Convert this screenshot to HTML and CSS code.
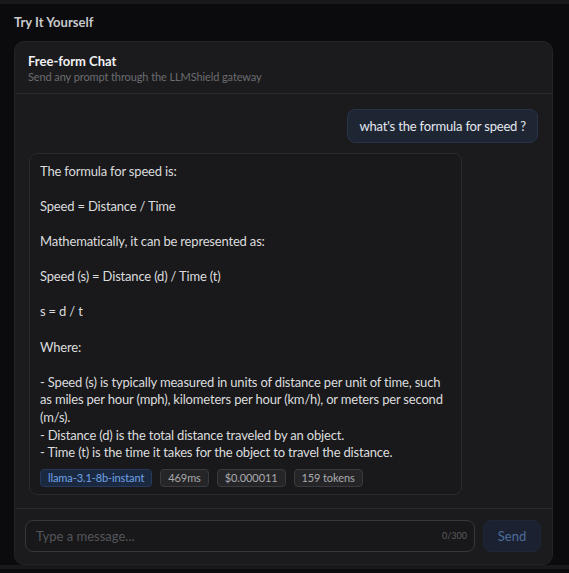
FILE: index.html
```html
<!doctype html>
<html lang="en">

<head>
  <meta charset="utf-8">
  <title>Try It Yourself</title>
  <link rel="stylesheet" href="styles.css">
</head>

<body>
  <div class="page">
    <h2 class="section-title">Try It Yourself</h2>

    <section class="chat-card">
      <header class="chat-head">
        <h3>Free-form Chat</h3>
        <p>Send any prompt through the LLMShield gateway</p>
      </header>

      <div class="chat-log">
        <div class="msg msg-user">what's the formula for speed ?</div>

        <div class="msg msg-bot">
          <div class="msg-text">The formula for speed is:

Speed = Distance / Time

Mathematically, it can be represented as:

Speed (s) = Distance (d) / Time (t)

s = d / t

Where:

- Speed (s) is typically measured in units of distance per unit of time, such as miles per hour (mph), kilometers per hour (km/h), or meters per second (m/s).
- Distance (d) is the total distance traveled by an object.
- Time (t) is the time it takes for the object to travel the distance.</div>
          <div class="meta">
            <span class="tag tag-model">llama-3.1-8b-instant</span>
            <span class="tag">469ms</span>
            <span class="tag">$0.000011</span>
            <span class="tag">159 tokens</span>
          </div>
        </div>
      </div>

      <form class="composer" onsubmit="return false">
        <label class="field">
          <input type="text" placeholder="Type a message..." maxlength="300">
          <span class="count">0/300</span>
        </label>
        <button type="submit" class="send" disabled>Send</button>
      </form>
    </section>
  </div>
</body>

</html>
```

FILE: styles.css
```css
html { background-color:#0b0b0d; }
body { margin:0; font-family:Lato,"Noto Sans",sans-serif; color:#d6d6d8; border-top:4px solid #19191b; border-bottom:4px solid #19191b; min-height:565px; box-sizing:border-box; }
.page { padding:9px 14px 0; }

.section-title { margin:0 0 10px; font-size:13px; font-weight:700; color:#c9c9cc; line-height:18px; }

.chat-card { width:539px; box-sizing:border-box; background-color:#1b1b1d; border:1px solid #242427; border-radius:10px; overflow:hidden; }

.chat-head { padding:11px 13px 9px; border-bottom:1px solid #2a2a2d; }
.chat-head h3 { margin:0; font-size:13px; font-weight:700; color:#f2f2f4; line-height:17px; }
.chat-head p { margin:0; font-size:11px; color:#6c6c70; line-height:14px; letter-spacing:-0.1px; }

.chat-log { display:flex; flex-direction:column; gap:10px; padding:15px 14px 13px; border-bottom:1px solid #29292c; }

.msg { font-size:13px; line-height:17.6px; border-radius:8px; letter-spacing:-0.18px; }
.msg-user { align-self:flex-end; background-color:#1f2633; border:1px solid #29334a; color:#e3e8f0; padding:8px 11px 6px; }
.msg-bot { align-self:flex-start; width:433px; box-sizing:border-box; background-color:#19191b; border:1px solid #2a2a2d; padding:9px 10px 7px; color:#dcdcde; }
.msg-text { white-space:pre-wrap; }

.meta { display:flex; gap:8px; margin-top:7px; letter-spacing:-0.1px; }
.tag { font-size:11px; line-height:16px; padding:0 7px; border:1px solid #3a3a3e; border-radius:4px; background-color:#252528; color:#aaaaae; }
.tag-model { background-color:#1b2940; border-color:#26395a; color:#6fa3e6; }

.composer { display:flex; gap:8px; padding:11px 11px 12px 10px; margin:0; }
.field { flex:1; display:flex; align-items:center; border:1px solid #38383b; border-radius:8px; background-color:#18181a; height:32px; box-sizing:border-box; padding:0 7px 0 10px; }
.field input { flex:1; min-width:0; border:0; outline:0; background:transparent; font:13px Lato,"Noto Sans",sans-serif; color:#d6d6d8; padding:0; }
.field input::placeholder { color:#55555a; }
.count { font-size:9px; color:#5a5a5e; }
.send { width:58px; height:32px; border:1px solid #202837; border-radius:8px; background-color:#1b2130; color:#4d6d9c; font:13px Lato,"Noto Sans",sans-serif; }
```
